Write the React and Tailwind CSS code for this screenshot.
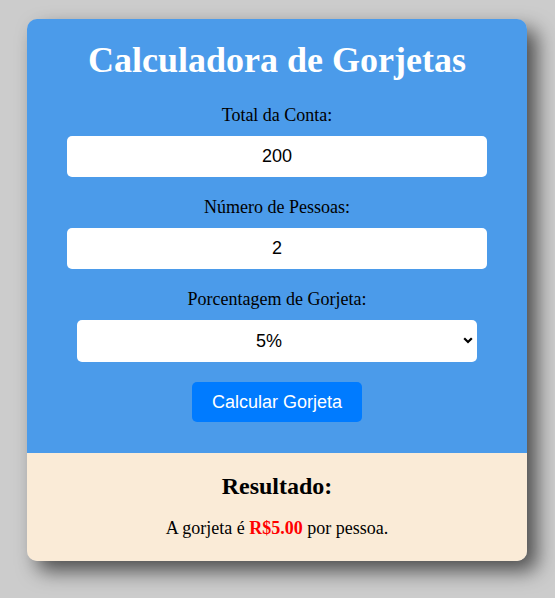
import React from "react";

export default function App() {
  return (
    <div className="min-h-screen bg-[#cccccc] pt-[19px] pl-[27px]" style={{ fontFamily: '"Liberation Serif", "Times New Roman", serif' }}>
      <div className="w-[500px] overflow-hidden rounded-[10px] shadow-[10px_10px_20px_rgba(0,0,0,0.62)]">
        <div className="flex flex-col items-center bg-[#4b9bea] px-0 pt-[20px] pb-[31px]">
          <h1 className="mb-[24px] text-[36px] font-bold leading-[normal] text-white">Calculadora de Gorjetas</h1>
          <label className="mb-[10px] block text-[18px] leading-[normal] text-black">Total da Conta:</label>
          <input
            type="text"
            defaultValue="200"
            className="mb-[20px] box-border h-[41px] w-[420px] rounded-[5px] border-0 bg-white px-[10px] text-center text-[18px] text-black outline-none"
            style={{ fontFamily: '"Liberation Sans", Arial, sans-serif' }}
          />
          <label className="mb-[10px] block text-[18px] leading-[normal] text-black">Número de Pessoas:</label>
          <input
            type="text"
            defaultValue="2"
            className="mb-[20px] box-border h-[41px] w-[420px] rounded-[5px] border-0 bg-white px-[10px] text-center text-[18px] text-black outline-none"
            style={{ fontFamily: '"Liberation Sans", Arial, sans-serif' }}
          />
          <label className="mb-[10px] block text-[18px] leading-[normal] text-black">Porcentagem de Gorjeta:</label>
          <div className="relative mb-[20px] flex h-[42px] w-[400px] items-center justify-center rounded-[5px] bg-white pl-[10px] pr-[26px]">
            <span className="text-[18px] text-black" style={{ fontFamily: '"Liberation Sans", Arial, sans-serif' }}>5%</span>
            <svg className="absolute right-[4px] top-[17px]" width="10" height="7" viewBox="0 0 10 7">
              <path d="M1.2 1.2 L5 5 L8.8 1.2" fill="none" stroke="#000" strokeWidth="2.2" />
            </svg>
          </div>
          <button
            className="h-[40px] w-[170px] rounded-[5px] bg-[#007bff] text-[18px] text-white"
            style={{ fontFamily: '"Liberation Sans", Arial, sans-serif' }}
          >
            Calcular Gorjeta
          </button>
        </div>
        <div className="flex flex-col items-center bg-[#faebd7] pt-[20px] pb-[22px]">
          <h2 className="text-[24px] font-bold leading-[normal] text-black">Resultado:</h2>
          <p className="mt-[18px] text-[18px] leading-[normal] text-black">
            A gorjeta é <span className="font-bold text-[#ff0000]">R$5.00</span> por pessoa.
          </p>
        </div>
      </div>
    </div>
  );
}
